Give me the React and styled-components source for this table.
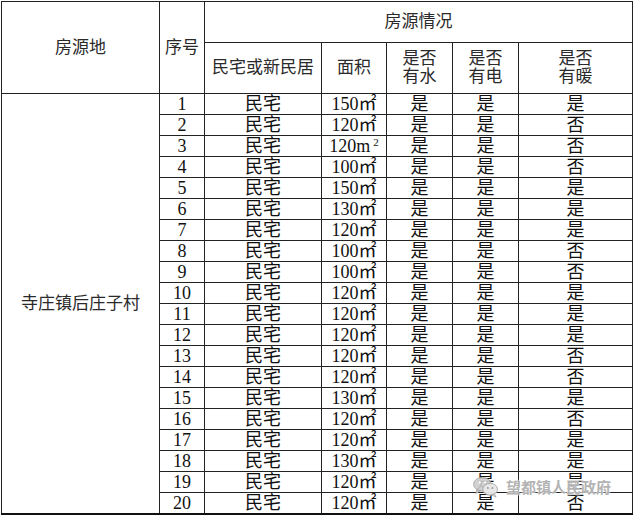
import React from "react";
import styled, { createGlobalStyle } from "styled-components";

const Global = createGlobalStyle`
  html, body { margin: 0; padding: 0; background: #fff; }
  body { width: 633px; height: 516px; overflow: hidden; }
`;

const Page = styled.div`
  position: relative;
  width: 633px;
  height: 516px;
  padding: 1px 0 0 1px;
  box-sizing: border-box;
  background: #fff;
`;

const Table = styled.table`
  border-collapse: collapse;
  table-layout: fixed;
  width: 631px;
  font-family: "Liberation Serif", "Noto Sans CJK SC", serif;
  color: #111;
  border-bottom: 2px solid #111;
`;

const Cell = styled.td`
  border: 1px solid #222;
  padding: 0;
  text-align: center;
  vertical-align: middle;
  font-size: ${(p) => (p.$head ? "17px" : "18px")};
  line-height: ${(p) => (p.$head ? "18px" : "20px")};
  height: ${(p) => p.$h || 20}px;
  max-height: ${(p) => p.$h || 20}px;
  overflow: hidden;
  white-space: nowrap;
  color: ${(p) => (p.$head ? "#2a2a2a" : "#111")};
`;

const DataRow = styled.tr`
  height: 21px;
`;

const Sup = styled.span`
  display: inline-block;
  font-size: 11px;
  line-height: 0;
  position: relative;
  top: -6px;
  margin-left: 3px;
`;

const Watermark = styled.div`
  position: absolute;
  left: 472px;
  top: 476px;
  display: flex;
  align-items: center;
  gap: 6px;
  font-family: "Noto Sans CJK SC", sans-serif;
  font-size: 15px;
  line-height: 20px;
  font-weight: 700;
  color: rgba(165, 165, 165, 0.85);
  text-shadow: 0 0 2px #fff, 0 0 2px #fff;
  pointer-events: none;
`;

const cols = [158, 45, 117, 65, 66, 66, 114];

const rows = [
  [1, "150", "是", "是", "是"],
  [2, "120", "是", "是", "否"],
  [3, "odd", "是", "是", "否"],
  [4, "100", "是", "是", "否"],
  [5, "150", "是", "是", "是"],
  [6, "130", "是", "是", "是"],
  [7, "120", "是", "是", "是"],
  [8, "100", "是", "是", "否"],
  [9, "100", "是", "是", "否"],
  [10, "120", "是", "是", "是"],
  [11, "120", "是", "是", "是"],
  [12, "120", "是", "是", "是"],
  [13, "120", "是", "是", "否"],
  [14, "120", "是", "是", "否"],
  [15, "130", "是", "是", "是"],
  [16, "120", "是", "是", "否"],
  [17, "120", "是", "是", "是"],
  [18, "130", "是", "是", "是"],
  [19, "120", "是", "是", "是"],
  [20, "120", "是", "是", "否"],
];

function Area({ v }) {
  if (v === "odd")
    return (
      <>
        120m<Sup>2</Sup>
      </>
    );
  return <>{v}㎡</>;
}

function WeChat() {
  return (
    <svg width="28" height="22" viewBox="0 0 30 24">
      <g fill="rgba(205,205,205,0.9)" stroke="rgba(160,160,160,0.9)" strokeWidth="1">
        <ellipse cx="11" cy="9" rx="9.5" ry="7.5" />
        <path d="M5 15 L4 19 L9 16 Z" />
        <ellipse cx="19.5" cy="14.5" rx="8" ry="6.5" fill="rgba(232,232,232,0.95)" />
        <path d="M24 19.5 L26 23 L21 20.5 Z" fill="rgba(232,232,232,0.95)" />
      </g>
      <circle cx="8" cy="7" r="1.2" fill="#fff" />
      <circle cx="14" cy="7" r="1.2" fill="#fff" />
      <circle cx="17" cy="13" r="1" fill="#999" />
      <circle cx="22" cy="13" r="1" fill="#999" />
    </svg>
  );
}

export default function App() {
  return (
    <Page>
      <Global />
      <Table>
        <colgroup>
          {cols.map((w, i) => (
            <col key={i} style={{ width: w }} />
          ))}
        </colgroup>
        <tbody>
          <tr>
            <Cell $head rowSpan={2} $h={91}>房源地</Cell>
            <Cell $head rowSpan={2} $h={91}>序号</Cell>
            <Cell $head colSpan={5} $h={40}>房源情况</Cell>
          </tr>
          <tr>
            <Cell $head $h={50}>民宅或新民居</Cell>
            <Cell $head $h={50}>面积</Cell>
            <Cell $head $h={50}>是否<br />有水</Cell>
            <Cell $head $h={50}>是否<br />有电</Cell>
            <Cell $head $h={50}>是否<br />有暖</Cell>
          </tr>
          {rows.map((r, i) => (
            <DataRow key={r[0]}>
              {i === 0 && (
                <Cell $head rowSpan={20}>寺庄镇后庄子村</Cell>
              )}
              <Cell>{r[0]}</Cell>
              <Cell>民宅</Cell>
              <Cell><Area v={r[1]} /></Cell>
              <Cell>{r[2]}</Cell>
              <Cell>{r[3]}</Cell>
              <Cell>{r[4]}</Cell>
            </DataRow>
          ))}
        </tbody>
      </Table>
      <Watermark>
        <WeChat />
        <span>望都镇人民政府</span>
      </Watermark>
    </Page>
  );
}
